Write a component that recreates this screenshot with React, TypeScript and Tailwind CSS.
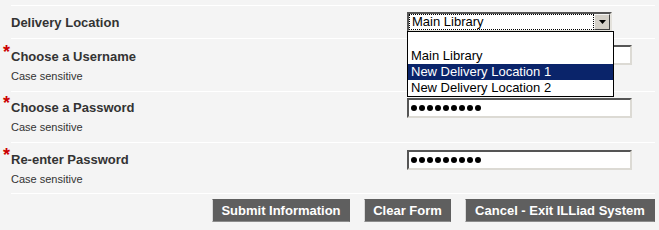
const locations = ["", "Main Library", "New Delivery Location 1", "New Delivery Location 2"];

const buttons = [
  { text: "Submit Information", w: "w-[138px]" },
  { text: "Clear Form", w: "w-[87px]" },
  { text: "Cancel - Exit ILLiad System", w: "w-[190px]" },
];

function DeliverySelect() {
  return (
    <div className="relative">
      <div className="flex w-[205px] h-[20px] border-2 border-t-[#555] border-l-[#555] border-r-[#e4e2dc] border-b-[#e4e2dc] bg-white">
        <div className="flex-1 border border-dotted border-black flex items-center pl-[2px] text-[13px] leading-[14px] text-black">
          Main Library
        </div>
        <div className="w-[16px] h-full bg-[#d4d0c8] border border-t-[#f4f4f4] border-l-[#f4f4f4] border-r-[#404040] border-b-[#404040] flex items-center justify-center">
          <svg width="7" height="4" viewBox="0 0 7 4">
            <path d="M0 0h7L3.5 4z" fill="#000" />
          </svg>
        </div>
      </div>
      <ul className="absolute left-0 top-[19px] z-10 w-[207px] border border-black bg-white">
        {locations.map((loc, i) => (
          <li
            key={i}
            className={
              i === 2
                ? "h-[16px] pl-[3px] text-[13px] leading-[16px] bg-[#0a246a] text-white"
                : "h-[16px] pl-[3px] text-[13px] leading-[16px] text-black"
            }
          >
            {loc}
          </li>
        ))}
      </ul>
    </div>
  );
}

function TextBox({ dots }: { dots?: number }) {
  return (
    <div className="w-[225px] h-[20px] border-2 border-t-[#555] border-l-[#555] border-r-[#dcdad4] border-b-[#dcdad4] bg-white flex items-center pl-[2px] gap-[2px]">
      {Array.from({ length: dots ?? 0 }).map((_, i) => (
        <span key={i} className="w-[6px] h-[6px] rounded-full bg-black" />
      ))}
    </div>
  );
}

function Label({ text, required }: { text: string; required?: boolean }) {
  return (
    <div className="relative text-[13px] leading-[15px] font-bold">
      {required && (
        <span className="absolute left-[-8px] top-[-6px] text-[18px] leading-[18px] font-bold text-[#cc0000]">*</span>
      )}
      {text}
    </div>
  );
}

function FieldRow({
  label,
  h,
  labelPad,
  inputPad,
  dots,
}: {
  label: string;
  h: string;
  labelPad: string;
  inputPad: string;
  dots?: number;
}) {
  return (
    <div className={`flex border-t border-white ${h}`}>
      <div className={`w-[396px] ${labelPad}`}>
        <Label text={label} required />
        <div className="mt-[6px] text-[11px] leading-[13px]">Case sensitive</div>
      </div>
      <div className={inputPad}>
        <TextBox dots={dots} />
      </div>
    </div>
  );
}

export default function App() {
  return (
    <div className="w-[659px] h-[230px] overflow-hidden bg-[#f4f4f4] pt-[5px] pl-[11px] pr-[4px] font-['Liberation_Sans',Arial,sans-serif] text-[#333]">
      <div className="flex h-[33px] items-center border-t border-white">
        <div className="w-[396px] text-[13px] leading-[15px] font-bold">Delivery Location</div>
        <DeliverySelect />
      </div>

      <FieldRow label="Choose a Username" h="h-[53px]" labelPad="pt-[10px]" inputPad="pt-[6px]" />
      <FieldRow label="Choose a Password" h="h-[51px]" labelPad="pt-[8px]" inputPad="pt-[6px]" dots={9} />
      <FieldRow label="Re-enter Password" h="h-[51px]" labelPad="pt-[9px]" inputPad="pt-[7px]" dots={9} />

      <div className="flex justify-end gap-[14px] border-t border-white pt-[5px]">
        {buttons.map((b) => (
          <button
            key={b.text}
            className={`${b.w} h-[23px] bg-[#5f5f5f] border border-[#5f5f5f] border-l-[#d8d8d8] border-b-[#8c8c8c] text-white text-[13px] leading-[15px] font-bold`}
          >
            {b.text}
          </button>
        ))}
      </div>
    </div>
  );
}
